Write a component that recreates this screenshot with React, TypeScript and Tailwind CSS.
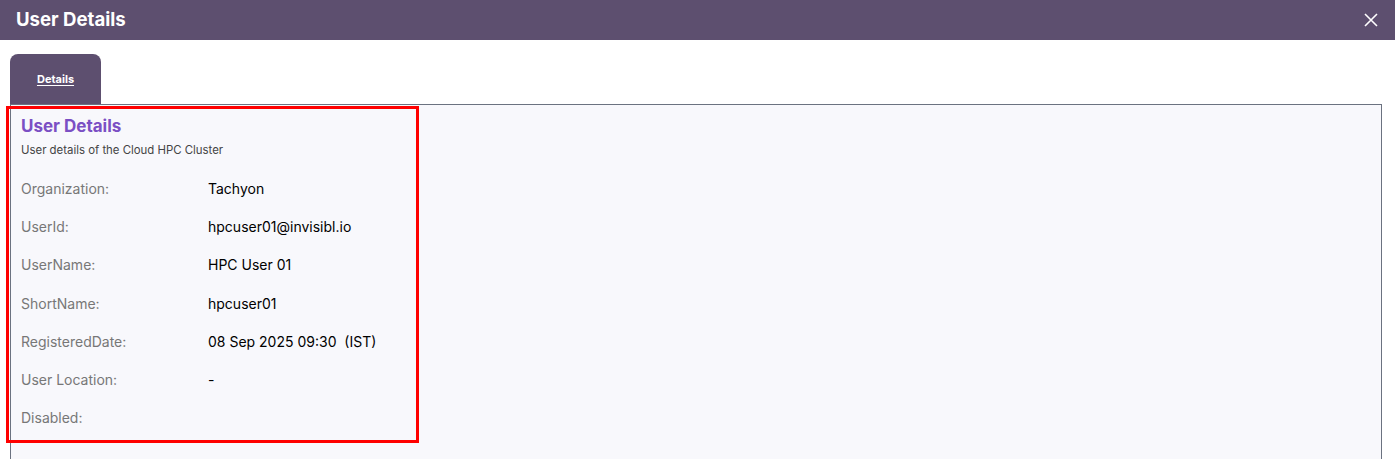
import React from "react";

const rows: [string, string][] = [
  ["Organization:", "Tachyon"],
  ["UserId:", "hpcuser01@invisibl.io"],
  ["UserName:", "HPC User 01"],
  ["ShortName:", "hpcuser01"],
  ["RegisteredDate:", "08 Sep 2025 09:30\u00a0 (IST)"],
  ["User Location:", "-"],
  ["Disabled:", ""],
];

const App = () => {
  return (
    <div className="w-[1395px] h-[459px] overflow-hidden bg-white font-['Inter',sans-serif] relative">
      <div className="h-[40px] bg-[#5d4f6f] flex items-center justify-between pl-4 pr-4">
        <h1 className="text-[18.6px] font-bold text-white">User Details</h1>
        <button className="text-white">
          <svg width="16" height="16" viewBox="0 0 16 16" fill="none" stroke="currentColor" strokeWidth="1.6">
            <path d="M2 2l12 12M14 2L2 14" />
          </svg>
        </button>
      </div>

      <div className="pl-[10px] pr-[13px] pt-[14px]">
        <div className="flex">
          <div className="w-[91px] h-[50px] rounded-t-lg bg-[#5d4f6f] flex items-center justify-center">
            <span className="text-[11px] font-bold text-white underline underline-offset-2">Details</span>
          </div>
        </div>
        <div className="border border-[#6b7280] bg-[#f8f8fc] h-[400px]">
          <div className="w-[400px] pl-[10px] pt-[11px]">
            <h2 className="text-[17px] font-bold text-[#7b4fc4] leading-5">User Details</h2>
            <p className="text-[11.4px] leading-4 text-[#444] mt-[6px]">User details of the Cloud HPC Cluster</p>
            <div className="mt-[11px] flex flex-col">
              {rows.map(([label, value]) => (
                <div key={label} className="flex h-[38.3px] items-center text-[14px]">
                  <span className="w-[187px] text-[#777]">{label}</span>
                  <span className="text-black">{value}</span>
                </div>
              ))}
            </div>
          </div>
        </div>
      </div>

      <div className="absolute left-[6px] top-[106px] w-[413px] h-[337px] border-[3px] border-[#ff0000] pointer-events-none" />
    </div>
  );
};

export default App;
